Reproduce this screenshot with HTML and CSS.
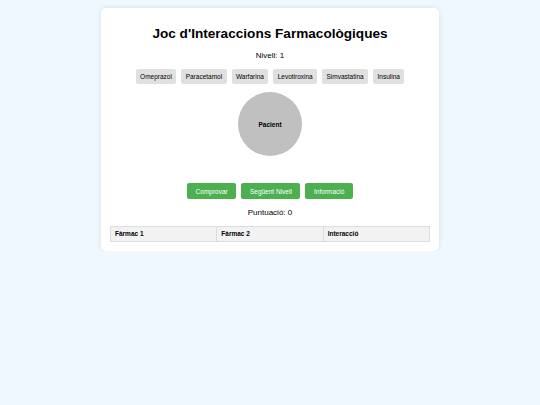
FILE: index.html
```html
<!DOCTYPE html>
<html lang="ca">
<head>
<meta charset="utf-8">
<title>Joc d'Interaccions Farmacològiques</title>
<link rel="stylesheet" href="styles.css">
</head>
<body>
<div class="container">
  <h1 class="title">Joc d'Interaccions Farmacològiques</h1>
  <div class="level">Nivell: 1</div>
  <div class="drugs">
    <span class="drug">Omeprazol</span>
    <span class="drug">Paracetamol</span>
    <span class="drug">Warfarina</span>
    <span class="drug">Levotiroxina</span>
    <span class="drug">Simvastatina</span>
    <span class="drug">Insulina</span>
  </div>
  <div class="patient-wrap">
    <div class="patient">Pacient</div>
  </div>
  <div class="actions">
    <button class="btn">Comprovar</button>
    <button class="btn">Següent Nivell</button>
    <button class="btn">Informació</button>
  </div>
  <div class="score">Puntuació: 0</div>
  <table class="results">
    <thead>
      <tr><th>Fàrmac 1</th><th>Fàrmac 2</th><th>Interacció</th></tr>
    </thead>
  </table>
</div>
</body>
</html>
```
FILE: styles.css
```css
html, body {
  margin: 0;
  padding: 0;
}
body {
  background: #f0f8ff;
  font-family: "Liberation Sans", Arial, sans-serif;
  color: #000;
  padding-top: 8px;
}
.container {
  width: 320px;
  margin: 0 auto;
  background: #fff;
  border-radius: 5px;
  box-shadow: 0 0 5px rgba(0, 0, 0, 0.1);
  padding: 10px 9px 9px;
}
.title {
  font-size: 13.6px;
  font-weight: bold;
  text-align: center;
  margin: 6px 0 0;
  line-height: 19px;
}
.level {
  text-align: center;
  font-size: 8px;
  margin-top: 7px;
  line-height: 11px;
}
.drugs {
  display: flex;
  justify-content: center;
  gap: 5px;
  margin-top: 8px;
}
.drug {
  background: #e0e0e0;
  border-radius: 2px;
  font-size: 6.5px;
  line-height: 15px;
  padding: 0 4.4px;
}
.patient-wrap {
  display: flex;
  justify-content: center;
  margin-top: 8px;
}
.patient {
  width: 64px;
  height: 64px;
  border-radius: 50%;
  background: #c0c0c0;
  display: flex;
  align-items: center;
  justify-content: center;
  font-size: 6.5px;
  font-weight: bold;
}
.actions {
  display: flex;
  justify-content: center;
  gap: 5px;
  margin-top: 27px;
}
.btn {
  background: #4caf50;
  color: #fff;
  border: none;
  border-radius: 2px;
  font-family: "Liberation Sans", Arial, sans-serif;
  font-size: 6.5px;
  height: 16px;
  padding: 0 8.6px;
}
.score {
  text-align: center;
  font-size: 8px;
  margin-top: 8px;
  line-height: 12px;
}
.results {
  width: 100%;
  border-collapse: collapse;
  margin-top: 7px;
  table-layout: fixed;
}
.results th {
  background: #f2f2f2;
  border: 1px solid #ddd;
  font-size: 6.5px;
  text-align: left;
  padding: 3px 4px;
  line-height: 8px;
}
```
